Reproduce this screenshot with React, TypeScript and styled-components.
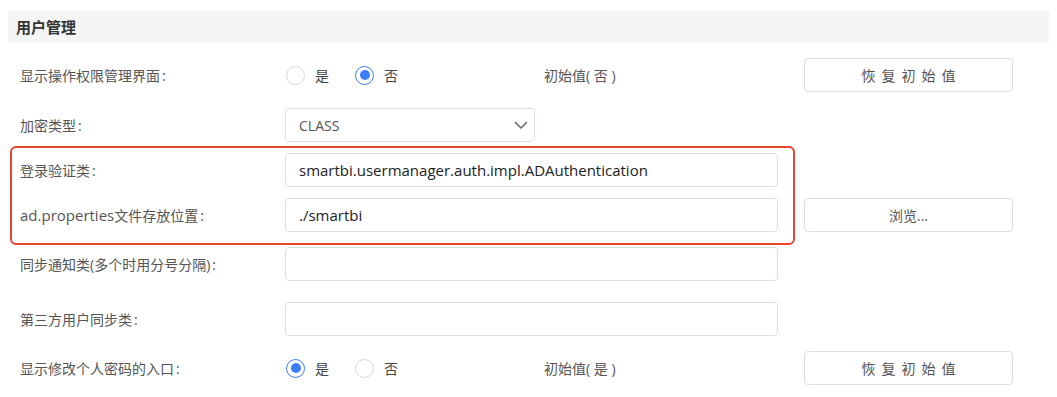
import React from 'react';
import styled, { createGlobalStyle } from 'styled-components';

const GlobalStyle = createGlobalStyle`
  body {
    margin: 8px;
    background: #ffffff;
    font-family: "Open Sans", "Noto Sans CJK SC", sans-serif;
    font-size: 14px;
    color: #555;
  }
`;

const Page = styled.div`
  display: flex;
  flex-direction: column;
  padding-top: 3px;
`;

const SectionHeader = styled.div`
  height: 31px;
  display: flex;
  align-items: center;
  padding-left: 8px;
  background: #f5f5f5;
  color: #333;
  font-size: 15px;
  font-weight: 700;
`;

const Row = styled.div<{ $gap: number }>`
  display: grid;
  grid-template-columns: 239px 493px 209px;
  column-gap: 26px;
  align-items: center;
  height: 34px;
  margin-top: ${p => p.$gap}px;
  padding-left: 12px;
`;

const Label = styled.div`
  color: #555;
  font-size: 14px;
  white-space: nowrap;
  &::after {
    content: ':';
    margin-left: 2px;
  }
`;

const Latin = styled.span`
  font-size: 15px;
`;

const TextInput = styled.input`
  box-sizing: border-box;
  width: 100%;
  height: 34px;
  padding: 0 13px;
  border: 1px solid #dcdce6;
  border-radius: 4px;
  background: #fff;
  color: #222;
  font-family: "Open Sans", "Noto Sans CJK SC", sans-serif;
  font-size: 15px;
  outline: none;
`;

const SelectBox = styled.div`
  box-sizing: border-box;
  width: 250px;
  height: 34px;
  display: flex;
  align-items: center;
  justify-content: space-between;
  padding: 0 6px 0 13px;
  border: 1px solid #dcdce6;
  border-radius: 4px;
  color: #555;
  font-size: 14px;
`;

const RadioCell = styled.div`
  display: flex;
  align-items: center;
`;

const RadioGroup = styled.div`
  width: 259px;
  display: flex;
  align-items: center;
  gap: 25px;
`;

const RadioOption = styled.label`
  display: flex;
  align-items: center;
  gap: 10px;
  color: #444;
  font-size: 14px;
`;

const RadioMark = styled.span<{ $checked: boolean }>`
  box-sizing: border-box;
  width: 19px;
  height: 19px;
  margin-left: 1px;
  border-radius: 50%;
  border: 1px solid ${p => (p.$checked ? '#3d7cf7' : '#d6d6e2')};
  display: flex;
  align-items: center;
  justify-content: center;
  &::after {
    content: '';
    width: 10px;
    height: 10px;
    border-radius: 50%;
    background: ${p => (p.$checked ? '#3d7cf7' : 'transparent')};
  }
`;

const InitialValue = styled.span`
  color: #555;
  font-size: 14px;
  white-space: pre;
`;

const Button = styled.button<{ $spaced?: boolean }>`
  box-sizing: border-box;
  width: 209px;
  height: 34px;
  border: 1px solid #dcdce6;
  border-radius: 4px;
  background: #fff;
  color: #555;
  font-family: "Open Sans", "Noto Sans CJK SC", sans-serif;
  font-size: 14px;
  letter-spacing: ${p => (p.$spaced ? '6px' : '0')};
  padding: 0 0 0 ${p => (p.$spaced ? '6px' : '0')};
  cursor: pointer;
`;

const Highlight = styled.div`
  position: relative;
  display: flex;
  flex-direction: column;
`;

const HighlightFrame = styled.div`
  position: absolute;
  top: 4px;
  left: 2px;
  width: 785px;
  height: 99px;
  box-sizing: border-box;
  border: 2px solid #e8432d;
  border-radius: 6px;
  pointer-events: none;
`;

const Chevron = () => (
  <svg width="14" height="8" viewBox="0 0 14 8" fill="none">
    <path d="M1 1l6 6 6-6" stroke="#666" strokeWidth="1.5" />
  </svg>
);

const YesNo = ({ value }: { value: boolean }) => (
  <RadioCell>
    <RadioGroup>
      <RadioOption>
        <RadioMark $checked={value} />是
      </RadioOption>
      <RadioOption>
        <RadioMark $checked={!value} />否
      </RadioOption>
    </RadioGroup>
    <InitialValue>初始值( {value ? '是' : '否'} )</InitialValue>
  </RadioCell>
);

const App = () => {
  return (
    <Page>
      <GlobalStyle />
      <SectionHeader>用户管理</SectionHeader>

      <Row $gap={16}>
        <Label>显示操作权限管理界面</Label>
        <YesNo value={false} />
        <Button $spaced>恢复初始值</Button>
      </Row>

      <Row $gap={16}>
        <Label>加密类型</Label>
        <SelectBox>
          CLASS
          <Chevron />
        </SelectBox>
      </Row>

      <Highlight>
        <HighlightFrame />
        <Row $gap={11}>
          <Label>登录验证类</Label>
          <TextInput readOnly value="smartbi.usermanager.auth.impl.ADAuthentication" />
        </Row>
        <Row $gap={11}>
          <Label>
            <Latin>ad.properties</Latin>文件存放位置
          </Label>
          <TextInput readOnly value="./smartbi" />
          <Button>浏览...</Button>
        </Row>
      </Highlight>

      <Row $gap={15}>
        <Label>同步通知类(多个时用分号分隔)</Label>
        <TextInput readOnly value="" />
      </Row>

      <Row $gap={21}>
        <Label>第三方用户同步类</Label>
        <TextInput readOnly value="" />
      </Row>

      <Row $gap={15}>
        <Label>显示修改个人密码的入口</Label>
        <YesNo value={true} />
        <Button $spaced>恢复初始值</Button>
      </Row>
    </Page>
  );
};

export default App;
